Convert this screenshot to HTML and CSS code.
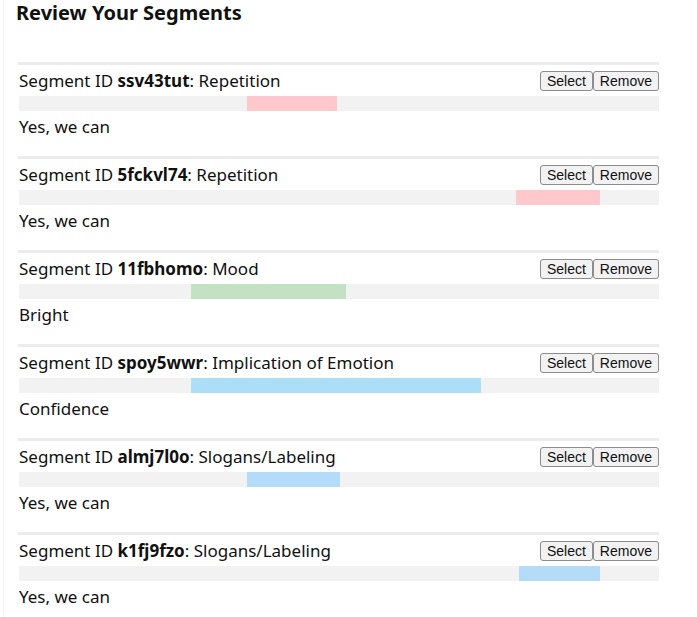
FILE: index.html
```html
<!DOCTYPE html>
<html>
<head>
<meta charset="utf-8">
<link rel="stylesheet" href="styles.css">
</head>
<body>
<div class="page">
  <h1 class="title">Review Your Segments</h1>
  <div class="list">
    <div class="segment">
      <div class="head">
        <div class="label">Segment ID <b>ssv43tut</b>: Repetition</div>
        <div class="actions"><button class="btn">Select</button><button class="btn">Remove</button></div>
      </div>
      <div class="bar"><div class="fill pink" style="margin-left:228px;width:90px"></div></div>
      <div class="text">Yes, we can</div>
    </div>
    <div class="segment">
      <div class="head">
        <div class="label">Segment ID <b>5fckvl74</b>: Repetition</div>
        <div class="actions"><button class="btn">Select</button><button class="btn">Remove</button></div>
      </div>
      <div class="bar"><div class="fill pink" style="margin-left:497px;width:84px"></div></div>
      <div class="text">Yes, we can</div>
    </div>
    <div class="segment">
      <div class="head">
        <div class="label">Segment ID <b>11fbhomo</b>: Mood</div>
        <div class="actions"><button class="btn">Select</button><button class="btn">Remove</button></div>
      </div>
      <div class="bar"><div class="fill green" style="margin-left:172px;width:155px"></div></div>
      <div class="text">Bright</div>
    </div>
    <div class="segment">
      <div class="head">
        <div class="label">Segment ID <b>spoy5wwr</b>: Implication of Emotion</div>
        <div class="actions"><button class="btn">Select</button><button class="btn">Remove</button></div>
      </div>
      <div class="bar"><div class="fill sky" style="margin-left:172px;width:290px"></div></div>
      <div class="text">Confidence</div>
    </div>
    <div class="segment">
      <div class="head">
        <div class="label">Segment ID <b>almj7l0o</b>: Slogans/Labeling</div>
        <div class="actions"><button class="btn">Select</button><button class="btn">Remove</button></div>
      </div>
      <div class="bar"><div class="fill blue" style="margin-left:228px;width:93px"></div></div>
      <div class="text">Yes, we can</div>
    </div>
    <div class="segment">
      <div class="head">
        <div class="label">Segment ID <b>k1fj9fzo</b>: Slogans/Labeling</div>
        <div class="actions"><button class="btn">Select</button><button class="btn">Remove</button></div>
      </div>
      <div class="bar"><div class="fill blue" style="margin-left:500px;width:81px"></div></div>
      <div class="text">Yes, we can</div>
    </div>
  </div>
</div>
</body>
</html>
```
FILE: styles.css
```css
html, body {
  margin: 0;
  padding: 0;
  background: #ffffff;
}
body {
  font-family: "Noto Sans", "Noto Sans CJK JP", sans-serif;
  color: #111;
}
.page {
  margin-left: 3px;
  border-left: 1px solid #f4f4f4;
  padding: 0 0 0 12px;
  min-height: 617px;
  box-sizing: border-box;
}
.title {
  margin: 0;
  padding-top: 1px;
  font-size: 20px;
  line-height: 24px;
  font-weight: 700;
  color: #111;
  height: 37px;
  box-sizing: border-box;
}
.list {
  margin-left: 2px;
  width: 641px;
  padding-top: 25px;
}
.segment {
  border-top: 3px solid #ececec;
  padding-bottom: 17px;
}
.head {
  display: flex;
  justify-content: space-between;
  align-items: center;
  height: 31px;
  padding-top: 1px;
  box-sizing: border-box;
  padding-left: 1px;
}
.label {
  font-size: 17px;
  line-height: 20px;
}
.label b {
  font-weight: 700;
}
.actions {
  display: flex;
}
.btn {
  font-family: "Liberation Sans", Arial, sans-serif;
  font-size: 14px;
  height: 20px;
  line-height: 16px;
  padding: 0 6px;
  margin: 0;
  background: #f2f2f2;
  border: 1px solid #8c8c8c;
  border-radius: 3px;
  color: #111;
}
.bar {
  margin-left: 1px;
  height: 15px;
  background: #f2f2f2;
  display: flex;
}
.fill {
  height: 15px;
}
.pink { background: #ffc8cd; }
.green { background: #c3e2c3; }
.sky { background: #acdff7; }
.blue { background: #b4dbf7; }
.text {
  margin-top: 4px;
  padding-left: 1px;
  font-size: 17px;
  line-height: 24px;
}
```
